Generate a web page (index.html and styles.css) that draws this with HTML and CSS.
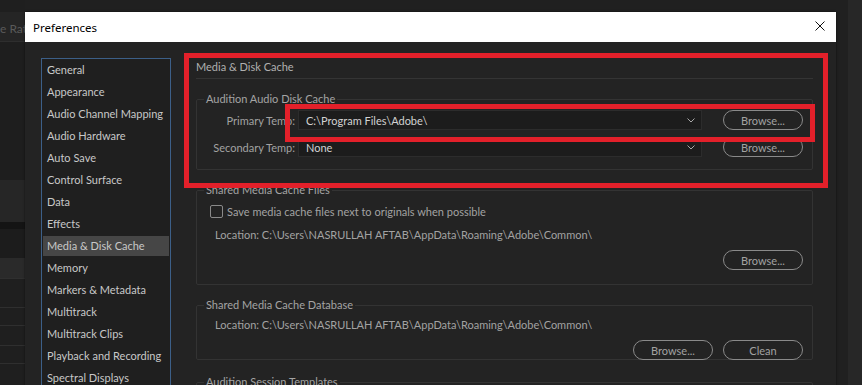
FILE: index.html
```html
<!DOCTYPE html>
<html lang="en">
<head>
  <meta charset="UTF-8" />
  <title>Preferences</title>
  <link rel="stylesheet" href="styles.css">
</head>
<body>

<!-- app window behind the dialog -->
<div class="backdrop">
  <div class="side">
    <div class="side_row side_top"></div>
    <div class="side_row side_head">e Rate</div>
    <div class="side_row side_gap"></div>
    <div class="side_row side_panel"></div>
    <div class="side_row side_split"></div>
    <div class="side_row side_dim"></div>
    <div class="side_row side_field"></div>
    <div class="side_row side_line h29"></div>
    <div class="side_row side_line h18"></div>
    <div class="side_row side_line h20"></div>
    <div class="side_row side_line h18"></div>
    <div class="side_row side_line h22"></div>
  </div>
  <div class="main_bg"></div>
  <div class="edge"></div>
</div>

<div class="dialog">
  <div class="titlebar">
    <span class="title">Preferences</span>
    <svg class="close" width="10" height="10" viewBox="0 0 10 10">
      <path d="M0.5 0.5 L9.5 9.5 M9.5 0.5 L0.5 9.5" stroke="#111" stroke-width="1" fill="none"/>
    </svg>
  </div>

  <div class="dialog_body">
    <ul class="nav">
      <li>General</li>
      <li>Appearance</li>
      <li>Audio Channel Mapping</li>
      <li>Audio Hardware</li>
      <li>Auto Save</li>
      <li>Control Surface</li>
      <li>Data</li>
      <li>Effects</li>
      <li class="selected">Media &amp; Disk Cache</li>
      <li>Memory</li>
      <li>Markers &amp; Metadata</li>
      <li>Multitrack</li>
      <li>Multitrack Clips</li>
      <li>Playback and Recording</li>
      <li>Spectral Displays</li>
    </ul>

    <div class="pane">
      <div class="pane_title">Media &amp; Disk Cache</div>

      <fieldset class="group group_disk">
        <legend>Audition Audio Disk Cache</legend>
        <div class="field_row">
          <span class="field_label">Primary Temp:</span>
          <div class="dropdown">
            <span>C:\Program Files\Adobe\</span>
            <svg class="chevron" width="8" height="5" viewBox="0 0 8 5"><polyline points="0.5,0.5 4,4 7.5,0.5" fill="none" stroke="#a8a8a8" stroke-width="1"/></svg>
          </div>
          <button class="pill">Browse...</button>
        </div>
        <div class="field_row">
          <span class="field_label">Secondary Temp:</span>
          <div class="dropdown">
            <span>None</span>
            <svg class="chevron" width="8" height="5" viewBox="0 0 8 5"><polyline points="0.5,0.5 4,4 7.5,0.5" fill="none" stroke="#a8a8a8" stroke-width="1"/></svg>
          </div>
          <button class="pill">Browse...</button>
        </div>
      </fieldset>

      <fieldset class="group group_files">
        <legend>Shared Media Cache Files</legend>
        <div class="check_row">
          <span class="checkbox"></span>
          <span>Save media cache files next to originals when possible</span>
        </div>
        <div class="location">Location: C:\Users\NASRULLAH AFTAB\AppData\Roaming\Adobe\Common\</div>
        <div class="button_row">
          <button class="pill">Browse...</button>
        </div>
      </fieldset>

      <fieldset class="group group_db">
        <legend>Shared Media Cache Database</legend>
        <div class="location">Location: C:\Users\NASRULLAH AFTAB\AppData\Roaming\Adobe\Common\</div>
        <div class="button_row">
          <button class="pill">Browse...</button>
          <button class="pill">Clean</button>
        </div>
      </fieldset>

      <fieldset class="group group_templates">
        <legend>Audition Session Templates</legend>
      </fieldset>
    </div>
  </div>
</div>

<!-- red annotation boxes -->
<div class="mark mark_outer"></div>
<div class="mark mark_inner"></div>

</body>
</html>
```

FILE: styles.css
```css
*{box-sizing:border-box; margin:0; padding:0;}
body{width:862px; height:385px; overflow:hidden; position:relative; background:#1f1f1f;
     font-family:Lato, "Noto Sans", sans-serif; font-size:11px;}

/* backdrop app */
.backdrop{display:flex; flex-direction:row; width:100%; height:100%;}
.side{width:25px; display:flex; flex-direction:column; background:#1e1e1e; overflow:hidden;}
.side_row{width:100%; flex-shrink:0;}
.side_top{height:12px; background:#1f1f1f;}
.side_head{height:30px; background:#252525; color:#5a5a5a; font-size:12px; line-height:34px; white-space:nowrap;
           border-bottom:1px solid #2e2e2e;}
.side_gap{height:138px; background:#1e1e1e;}
.side_panel{height:42px; background:#262626;}
.side_split{height:7px; background:#141414;}
.side_dim{height:29px; background:#1c1c1c;}
.side_field{height:20px; background:#2a2a2a;}
.side_line{border-top:1px solid #2f2f2f; background:#1f1f1f;}
.h29{height:29px;} .h18{height:18px;} .h20{height:20px;} .h22{height:22px;}
.main_bg{flex:1; background:#202020;}
.edge{width:14px; background:#272727;}

/* dialog window */
.dialog{position:absolute; left:25px; top:12px; width:811px; height:390px; background:#232323;
        box-shadow:0 0 2px rgba(0,0,0,0.6);}
.titlebar{height:30px; background:#fff; display:flex; align-items:center; justify-content:space-between;
          padding:0 11px 0 8px;}
.title{font-family:"Noto Sans", sans-serif; font-size:11.5px; color:#000; padding-top:1px;}
.close{display:block; margin-top:-2px;}

.dialog_body{display:flex; flex-direction:row; padding:16px 23px 0 16px; gap:25px;}

.nav{list-style:none; width:130px; height:340px; flex-shrink:0; background:#1f1f1f;
     border:1px solid #3c5f88; padding-top:0;}
.nav li{height:22px; margin:0 1px; padding-left:4px; line-height:20px; color:#c8c8c8; white-space:nowrap;
        border-top:1px solid transparent; border-bottom:1px solid transparent; background-clip:padding-box;}
.nav li.selected{background-color:#464646;}

.pane{flex:1; display:flex; flex-direction:column; color:#a2a2a2;}
.pane_title{height:21px; line-height:18px; color:#b0b0b0; border-bottom:1px solid #343434;}

.group{border:1px solid #333; border-radius:2px; padding:0 9px 0 0;}
.group legend{margin-left:7px; padding:0 2px; line-height:14px; color:#a4a4a4;}
.group_disk{margin-top:13px; padding-top:4px; padding-bottom:12px; display:flex; flex-direction:column; gap:7px;}
.group_files{margin-top:13px; height:102px; padding-top:5px;}
.group_db{margin-top:13px; height:62px; padding-top:0;}
.group_templates{margin-top:15px; height:40px;}

.field_row{display:flex; flex-direction:row; align-items:center; height:20px;}
.field_label{width:98px; text-align:right; white-space:nowrap;}
.dropdown{flex:1; margin-left:3px; height:20px; background:#1c1c1c; border:1px solid #2c2c2c;
          display:flex; align-items:center; justify-content:space-between; padding:0 6px 0 7px; color:#d2d2d2;}
.chevron{display:block;}

.pill{width:80px; height:20px; border:1px solid #8a8a8a; border-radius:10px; background:transparent;
      color:#a2a2a2; font-family:inherit; font-size:11px; line-height:17px;}
.field_row .pill{margin-left:21px;}

.check_row{display:flex; flex-direction:row; align-items:center; gap:4px; height:18px; padding-left:13px;}
.checkbox{width:13px; height:13px; border:1px solid #8a8a8a; border-radius:2px;}
.location{padding-left:18px; height:18px; line-height:18px; margin-top:6px; white-space:nowrap;}
.group_db .location{margin-top:4px;}
.button_row{display:flex; flex-direction:row; justify-content:flex-end; gap:10px; margin-top:6px;}

/* annotation overlay */
.mark{position:absolute; border:5px solid #e3202a;}
.mark_outer{left:184px; top:53px; width:644px; height:135px;}
.mark_inner{left:285px; top:104px; width:530px; height:38px;}
```
